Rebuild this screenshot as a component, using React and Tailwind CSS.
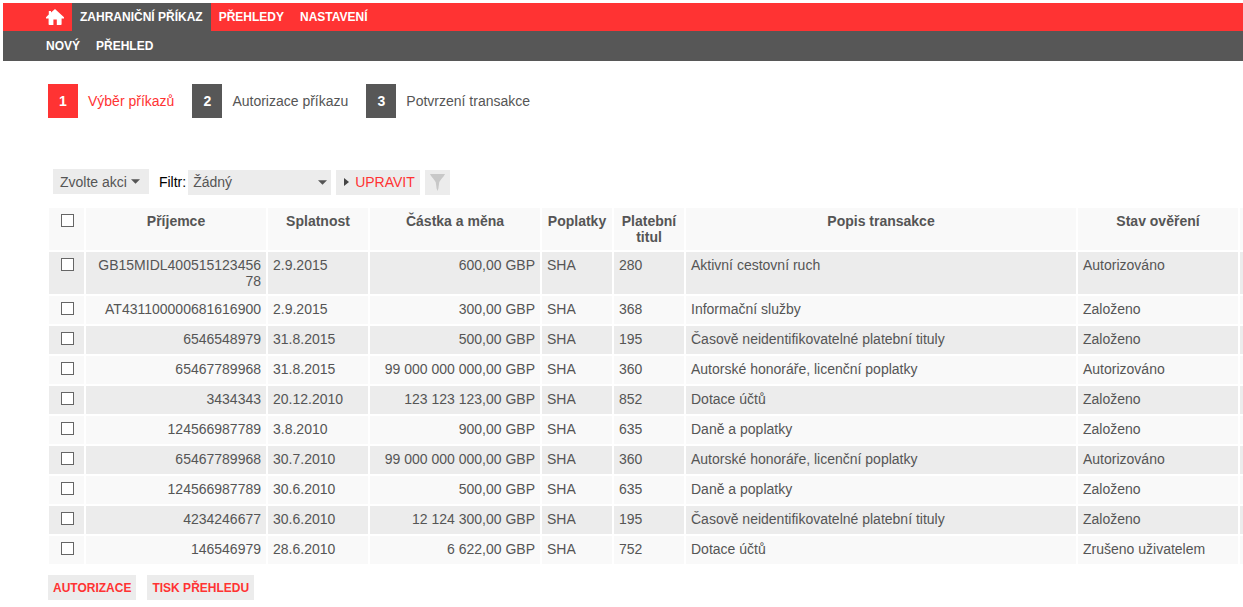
import { useState } from "react";

const MENU = ["Přehledy", "Nastavení"];

const STEPS = ["Výběr příkazů", "Autorizace příkazu", "Potvrzení transakce"];

const PAYMENTS = [
    { id: 1, payee: "GB15MIDL40051512345678", due: "2.9.2015", amount: "600,00 GBP", fee: "SHA", title: "280", description: "Aktivní cestovní ruch", status: "Autorizováno" },
    { id: 2, payee: "AT431100000681616900", due: "2.9.2015", amount: "300,00 GBP", fee: "SHA", title: "368", description: "Informační služby", status: "Založeno" },
    { id: 3, payee: "6546548979", due: "31.8.2015", amount: "500,00 GBP", fee: "SHA", title: "195", description: "Časově neidentifikovatelné platební tituly", status: "Založeno" },
    { id: 4, payee: "65467789968", due: "31.8.2015", amount: "99 000 000 000,00 GBP", fee: "SHA", title: "360", description: "Autorské honoráře, licenční poplatky", status: "Autorizováno" },
    { id: 5, payee: "3434343", due: "20.12.2010", amount: "123 123 123,00 GBP", fee: "SHA", title: "852", description: "Dotace účtů", status: "Založeno" },
    { id: 6, payee: "124566987789", due: "3.8.2010", amount: "900,00 GBP", fee: "SHA", title: "635", description: "Daně a poplatky", status: "Založeno" },
    { id: 7, payee: "65467789968", due: "30.7.2010", amount: "99 000 000 000,00 GBP", fee: "SHA", title: "360", description: "Autorské honoráře, licenční poplatky", status: "Autorizováno" },
    { id: 8, payee: "124566987789", due: "30.6.2010", amount: "500,00 GBP", fee: "SHA", title: "635", description: "Daně a poplatky", status: "Založeno" },
    { id: 9, payee: "4234246677", due: "30.6.2010", amount: "12 124 300,00 GBP", fee: "SHA", title: "195", description: "Časově neidentifikovatelné platební tituly", status: "Založeno" },
    { id: 10, payee: "146546979", due: "28.6.2010", amount: "6 622,00 GBP", fee: "SHA", title: "752", description: "Dotace účtů", status: "Zrušeno uživatelem" },
];

const HomeIcon = () => (
    <svg viewBox="0 0 18 16" className="w-[18px] h-4" fill="#fff">
        <path d="M9 0 18 8.2V9.5H15.6V15.2Q15.6 16 14.8 16H10.8V10.5H7.4V16H3.4Q2.6 16 2.6 15.2V9.5H0V8.2L2.8 5.6V2H5V3.6Z" />
    </svg>
);

const CaretDown = () => (
    <svg viewBox="0 0 10 5" className="w-[9px] h-[5px] pointer-events-none" fill="#555">
        <path d="M0 0H10L5 5Z" />
    </svg>
);

const RowCheckbox = ({ label, checked, onChange }) => (
    <input
        type="checkbox"
        aria-label={label}
        checked={checked}
        onChange={onChange}
        className="block mx-auto mt-px w-[13px] h-[13px] appearance-none border border-[#666] bg-white checked:bg-[#666]"
    />
);

const Header = () => (
    <header className="ml-[3px] mt-[3px] text-xs font-bold uppercase text-white">
        <nav className="flex h-7 items-stretch bg-[#f33] pl-[35px]">
            <a href="#home" aria-label="Domů" className="flex items-center px-2">
                <HomeIcon />
            </a>
            <a href="#foreign" className="flex items-center bg-[#575757] px-2">
                Zahraniční příkaz
            </a>
            {MENU.map((item) => (
                <a key={item} href="#menu" className="flex items-center px-2">
                    {item}
                </a>
            ))}
        </nav>
        <nav className="flex h-[30px] items-center bg-[#575757] pl-[35px]">
            <a href="#new" className="px-2">Nový</a>
            <a href="#list" className="px-2">Přehled</a>
        </nav>
    </header>
);

const Steps = () => (
    <ol className="ml-12 mt-[23px] flex gap-[18px]">
        {STEPS.map((step, index) => (
            <li key={step} className="flex items-center gap-[10px]">
                <span
                    className={`flex w-[30px] h-[34px] items-center justify-center font-bold text-white ${
                        index === 0 ? "bg-[#f33]" : "bg-[#575757]"
                    }`}
                >
                    {index + 1}
                </span>
                <span className={index === 0 ? "text-[#f33]" : ""}>{step}</span>
            </li>
        ))}
    </ol>
);

const Toolbar = () => (
    <div className="ml-[53px] mt-[51px] flex h-[26px] items-end">
        <button type="button" className="flex h-[25px] self-start items-center gap-1 bg-[#ececec] pl-[7px] pr-[9px]">
            Zvolte akci
            <CaretDown />
        </button>
        <label htmlFor="filter" className="flex h-[25px] items-center pb-px pl-[10px] pr-[2px] text-black">
            Filtr:
        </label>
        <div className="relative w-[143px]">
            <select
                id="filter"
                className="block h-[25px] w-full appearance-none bg-[#ececec] pb-px pl-[5px] pr-5"
            >
                <option>Žádný</option>
            </select>
            <span className="absolute right-1 top-[10px] pointer-events-none">
                <CaretDown />
            </span>
        </div>
        <button type="button" className="ml-[5px] flex h-[25px] items-center gap-[6px] bg-[#ececec] pb-px pl-2 pr-[5px] uppercase text-[#f33]">
            <svg viewBox="0 0 5 8" className="w-[5px] h-2" fill="#444">
                <path d="M0 0 5 4 0 8Z" />
            </svg>
            Upravit
        </button>
        <button type="button" aria-label="Filtrovat" className="ml-[5px] flex h-[25px] w-[25px] items-center justify-center bg-[#ececec]">
            <svg viewBox="0 0 15 17" className="w-[15px] h-[17px]" fill="#c8c8c8">
                <path d="M0 0H15C14.5 2 10 6 9.2 8.5L8.4 14.5 7.5 17 6.6 14.5 5.8 8.5C5 6 .5 2 0 0Z" />
            </svg>
        </button>
    </div>
);

const App = () => {
    const [selected, setSelected] = useState([]);

    const toggle = (id) =>
        setSelected((prev) =>
            prev.includes(id) ? prev.filter((x) => x !== id) : [...prev, id]
        );

    const allSelected = selected.length === PAYMENTS.length;

    const toggleAll = () =>
        setSelected(allSelected ? [] : PAYMENTS.map((p) => p.id));

    return (
        <div className="overflow-hidden bg-white pb-[7px] font-['Liberation_Sans',Arial,sans-serif] text-[14px] leading-4 text-[#555]">
            <Header />
            <Steps />
            <Toolbar />

            {/* The last column runs past the right edge of the window */}
            <div className="mt-[11px] overflow-hidden pl-[47px]">
                <table className="w-[calc(100%+39px)] min-w-[1100px] table-fixed border-separate border-spacing-[2px]">
                    <colgroup>
                        <col className="w-[35px]" />
                        <col className="w-[180px]" />
                        <col className="w-[100px]" />
                        <col className="w-[170px]" />
                        <col className="w-[70px]" />
                        <col className="w-[70px]" />
                        <col />
                        <col className="w-[160px]" />
                        <col className="w-[40px]" />
                    </colgroup>
                    <thead>
                        <tr className="h-[42px] bg-[#f9f9f9] align-top *:py-[5px] *:first:pl-[2px]">
                            <th>
                                <RowCheckbox
                                    label="Vybrat vše"
                                    checked={allSelected}
                                    onChange={toggleAll}
                                />
                            </th>
                            <th>Příjemce</th>
                            <th>Splatnost</th>
                            <th>Částka a měna</th>
                            <th>Poplatky</th>
                            <th>Platební titul</th>
                            <th>Popis transakce</th>
                            <th>Stav ověření</th>
                            <th></th>
                        </tr>
                    </thead>
                    <tbody>
                        {PAYMENTS.map((p) => (
                            <tr
                                key={p.id}
                                className="h-7 bg-[#f9f9f9] align-top odd:bg-[#ececec] *:p-[5px] *:first:pl-[7px]"
                            >
                                <td>
                                    <RowCheckbox
                                        label={`Vybrat ${p.payee}`}
                                        checked={selected.includes(p.id)}
                                        onChange={() => toggle(p.id)}
                                    />
                                </td>
                                <td className="break-all text-right">{p.payee}</td>
                                <td>{p.due}</td>
                                <td className="text-right">{p.amount}</td>
                                <td>{p.fee}</td>
                                <td>{p.title}</td>
                                <td>{p.description}</td>
                                <td>{p.status}</td>
                                <td></td>
                            </tr>
                        ))}
                    </tbody>
                </table>
            </div>

            <div className="ml-12 mt-[9px] flex gap-[11px] text-xs font-bold uppercase text-[#f33]">
                <button type="button" className="h-[25px] bg-[#ececec] px-[5px] uppercase">
                    Autorizace
                </button>
                <button type="button" className="h-[25px] bg-[#ececec] px-[5px] uppercase">
                    Tisk přehledu
                </button>
            </div>
        </div>
    );
};

export default App;
